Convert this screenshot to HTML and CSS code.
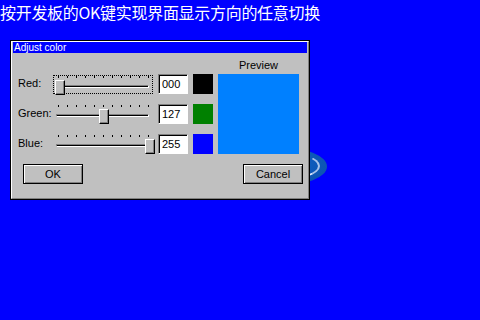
FILE: index.html
```html
<!DOCTYPE html>
<html lang="zh">
<head>
    <meta charset="UTF-8">
    <title>Adjust color</title>
    <link rel="stylesheet" href="styles.css">
</head>
<body>
    <div class="caption">按开发板的OK键实现界面显示方向的任意切换</div>

    <!-- glossy shape partly covered by the dialog -->
    <div class="blob"><div class="shine"></div></div>

    <div class="dialog">
        <div class="frame">
            <div class="title">Adjust color</div>

            <div class="body">
                <div class="main">
                    <div class="rows">
                        <div class="row">
                            <span class="label">Red:</span>
                            <div class="slider focused">
                                <div class="ticks"></div>
                                <div class="track"></div>
                                <div class="thumb" style="left: 1px"></div>
                            </div>
                            <div class="edit">000</div>
                            <div class="swatch swatch-red"></div>
                        </div>
                        <div class="row">
                            <span class="label">Green:</span>
                            <div class="slider">
                                <div class="ticks"></div>
                                <div class="track"></div>
                                <div class="thumb" style="left: 45px"></div>
                            </div>
                            <div class="edit">127</div>
                            <div class="swatch swatch-green"></div>
                        </div>
                        <div class="row">
                            <span class="label">Blue:</span>
                            <div class="slider">
                                <div class="ticks"></div>
                                <div class="track"></div>
                                <div class="thumb" style="left: 91px"></div>
                            </div>
                            <div class="edit">255</div>
                            <div class="swatch swatch-blue"></div>
                        </div>
                    </div>

                    <div class="preview-col">
                        <span class="preview-label">Preview</span>
                        <div class="preview" style="background-color: #0080ff"></div>
                    </div>
                </div>

                <div class="buttons">
                    <button class="btn">OK</button>
                    <button class="btn">Cancel</button>
                </div>
            </div>
        </div>
    </div>
</body>
</html>
```

FILE: styles.css
```css
body {
    margin: 0;
    width: 480px;
    height: 320px;
    background-color: #0000ff;
    overflow: hidden;
    position: relative;
    font-family: 'Liberation Sans', Arial, sans-serif;
}

.caption {
    height: 40px;
    box-sizing: border-box;
    padding-top: 3px;
    font-family: 'Noto Sans CJK SC', sans-serif;
    font-size: 16px;
    line-height: 18px;
    letter-spacing: -0.3px;
    color: #fff;
    white-space: nowrap;
}

/* the shape behind the dialog */
.blob {
    position: absolute;
    left: 230px;
    top: 147px;
    width: 97px;
    height: 39px;
    border-radius: 50%;
    background: radial-gradient(ellipse at 40% 40%, #1a6ad0 0%, #0c58b8 60%, #0a4ea8 100%);
}

.shine {
    position: absolute;
    left: 6px;
    top: 4px;
    width: 84px;
    height: 30px;
    border-radius: 50%;
    border: 2px solid transparent;
    border-bottom-color: #e8f0ff;
    border-right-color: rgba(232, 240, 255, 0.7);
    box-sizing: border-box;
}

.dialog {
    position: relative;
    margin-left: 10px;
    width: 300px;
    height: 160px;
    box-sizing: border-box;
    border: 1px solid #000;
    background-color: #c0c0c0;
}

.frame {
    height: 100%;
    box-sizing: border-box;
    border: 1px solid;
    border-color: #fff #808080 #808080 #fff;
    padding: 0 1px 1px 1px;
}

.title {
    height: 11px;
    background-color: #0000ff;
    color: #fff;
    font-size: 10px;
    line-height: 11px;
    padding-left: 1px;
    white-space: nowrap;
}

.body {
    padding: 5px 0 0 5px;
}

.main {
    display: flex;
    gap: 5px;
}

.rows {
    display: flex;
    flex-direction: column;
    gap: 10px;
    padding-top: 16px;
}

.row {
    display: flex;
    align-items: center;
    gap: 5px;
    height: 20px;
}

.label {
    width: 30px;
    font-size: 11px;
    color: #000;
    padding-bottom: 3px;
}

/* trackbar */
.slider {
    position: relative;
    width: 100px;
    height: 20px;
    box-sizing: border-box;
    border: 1px solid transparent;
}

.slider.focused {
    border: 1px dotted #000;
    height: 19px;
}

.ticks {
    position: absolute;
    left: 4px;
    top: 0;
    width: 91px;
    height: 2px;
    background: repeating-linear-gradient(to right, #000 0 1px, transparent 1px 9px);
}

.track {
    position: absolute;
    left: 2px;
    top: 9px;
    width: 91px;
    height: 1px;
    background-color: #000;
    border: 1px solid;
    border-color: #808080 #fff #fff #808080;
}

.thumb {
    position: absolute;
    top: 4px;
    width: 8px;
    height: 13px;
    background-color: #c0c0c0;
    border: 1px solid;
    border-color: #fff #000 #000 #fff;
    box-shadow: inset -1px -1px 0 #808080;
}

.edit {
    width: 30px;
    height: 20px;
    box-sizing: border-box;
    border: 1px solid;
    border-color: #808080 #fff #fff #808080;
    box-shadow: inset 1px 1px 0 #000;
    background-color: #fff;
    font-size: 11px;
    line-height: 18px;
    padding-left: 3px;
    color: #000;
}

.swatch {
    width: 20px;
    height: 20px;
}

.swatch-red {
    background-color: #000;
}

.swatch-green {
    background-color: #008000;
}

.swatch-blue {
    background-color: #0000ff;
}

.preview-col {
    display: flex;
    flex-direction: column;
    align-items: center;
}

.preview-label {
    height: 16px;
    font-size: 11px;
    line-height: 14px;
    color: #000;
}

.preview {
    width: 81px;
    height: 80px;
}

.buttons {
    display: flex;
    justify-content: space-between;
    margin-top: 10px;
    padding: 0 4px 0 5px;
}

.btn {
    width: 60px;
    height: 20px;
    box-sizing: border-box;
    padding: 0;
    margin: 0;
    border: 1px solid #000;
    background-color: #c0c0c0;
    box-shadow: inset 1px 1px 0 #fff, inset -1px -1px 0 #808080;
    font-family: 'Liberation Sans', Arial, sans-serif;
    font-size: 11px;
    color: #000;
}
```
